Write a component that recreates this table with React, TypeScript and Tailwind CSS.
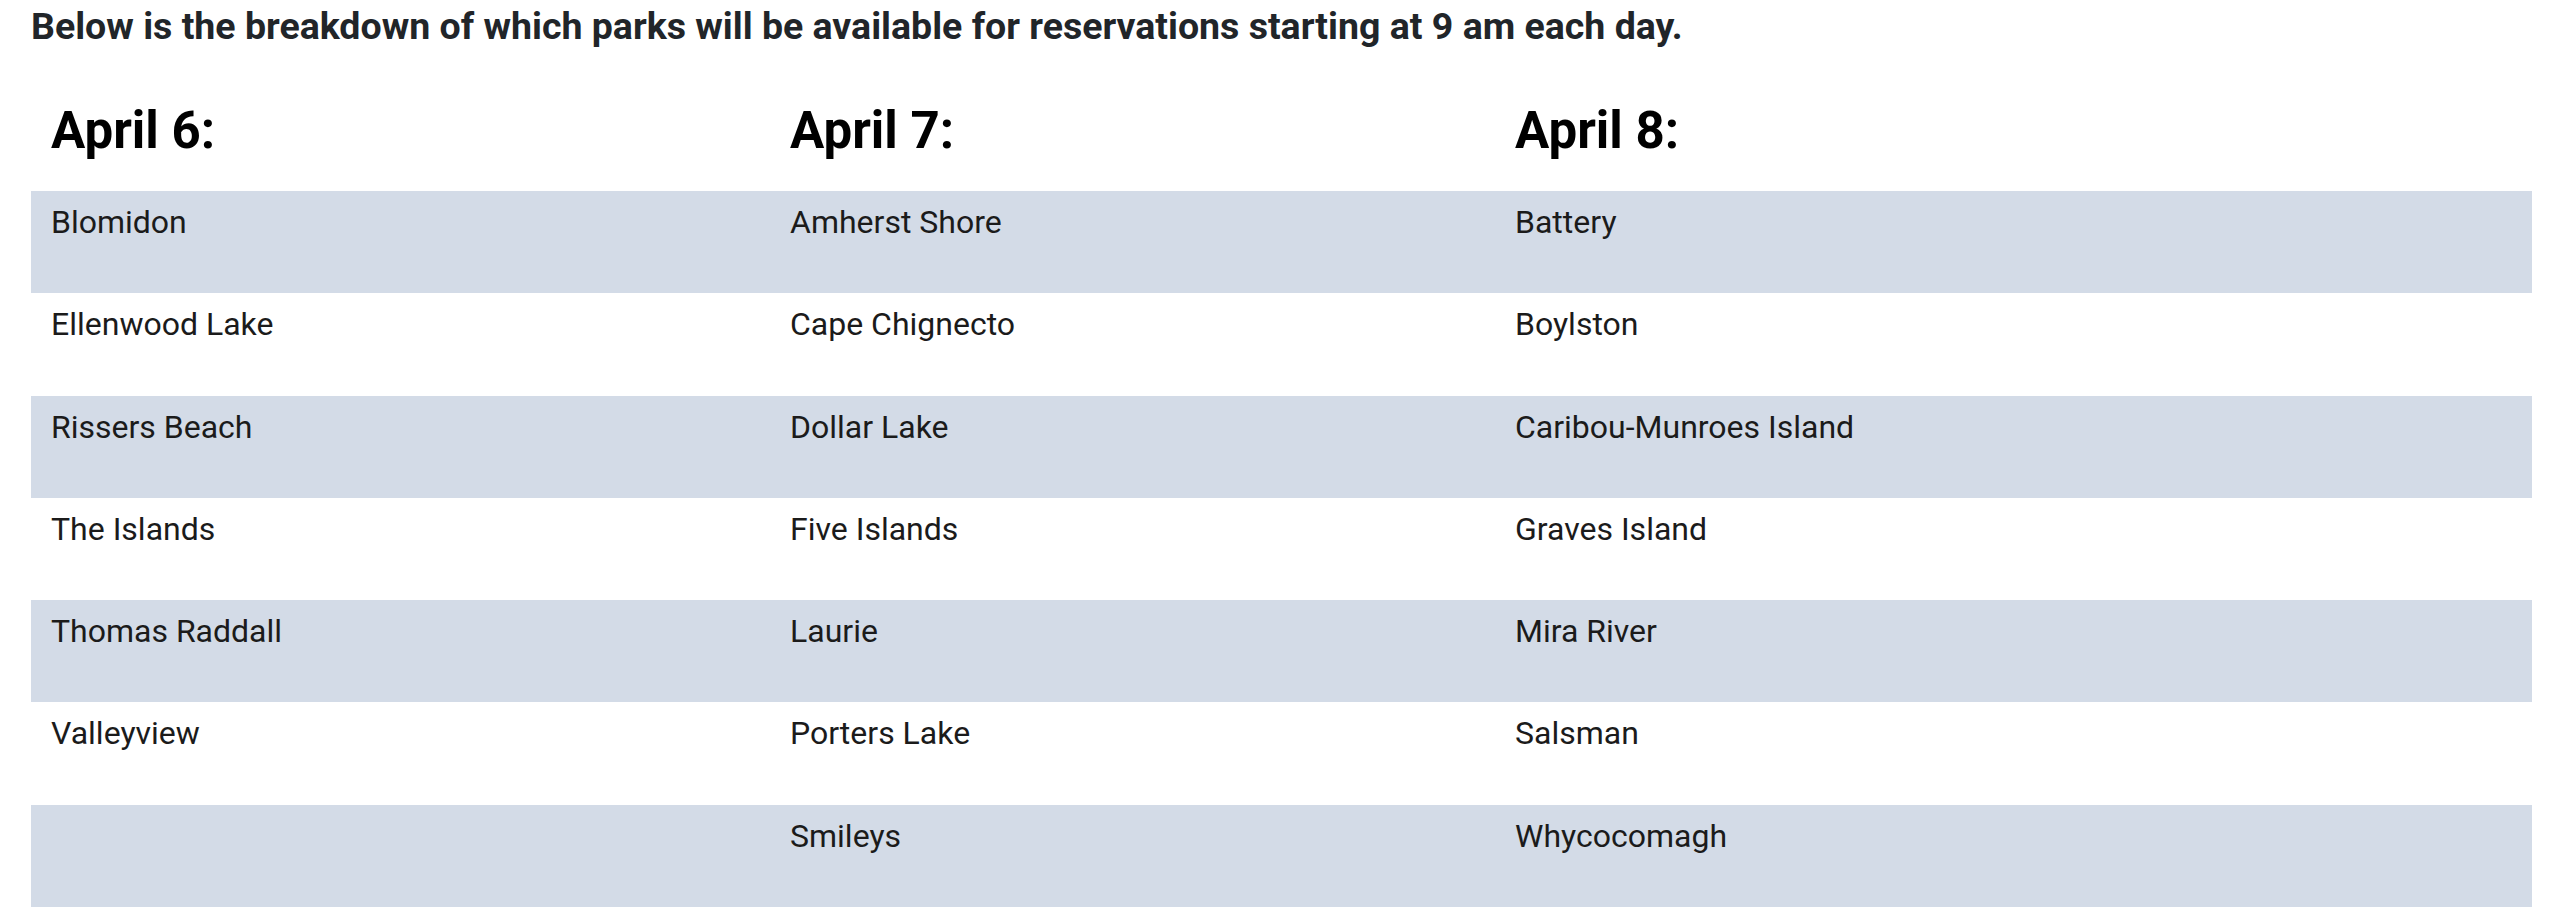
import React from "react";

const days = [
  {
    label: "April 6:",
    parks: ["Blomidon", "Ellenwood Lake", "Rissers Beach", "The Islands", "Thomas Raddall", "Valleyview", ""],
  },
  {
    label: "April 7:",
    parks: ["Amherst Shore", "Cape Chignecto", "Dollar Lake", "Five Islands", "Laurie", "Porters Lake", "Smileys"],
  },
  {
    label: "April 8:",
    parks: ["Battery", "Boylston", "Caribou-Munroes Island", "Graves Island", "Mira River", "Salsman", "Whycocomagh"],
  },
];

const rowCount = 7;

const App = () => {
  return (
    <div className="min-h-[910px] bg-white px-[31px] pt-[3px] font-['Roboto',sans-serif]">
      <p className="text-[37.5px] font-bold leading-[46px] text-[#212529]">
        Below is the breakdown of which parks will be available for reservations starting at 9 am each day.
      </p>

      <div className="w-[2501px]">
        {/* header row */}
        <div className="grid grid-cols-[739px_725px_1fr]">
          {days.map((day) => (
            <h2 key={day.label} className="px-[20px] pt-[52px] pb-[30px] text-[51px] font-bold leading-[60px] text-black">
              {day.label}
            </h2>
          ))}
        </div>

        {/* striped rows */}
        {Array.from({ length: rowCount }).map((_, row) => (
          <div
            key={row}
            className={`grid h-[102.3px] grid-cols-[739px_725px_1fr] ${row % 2 === 0 ? "bg-[#d3dbe7]" : "bg-white"}`}
          >
            {days.map((day) => (
              <div key={day.label} className="px-[20px] pt-[7px] text-[32px] leading-[48px] text-[#1b1b1b]">
                {day.parks[row]}
              </div>
            ))}
          </div>
        ))}
      </div>
    </div>
  );
};

export default App;
